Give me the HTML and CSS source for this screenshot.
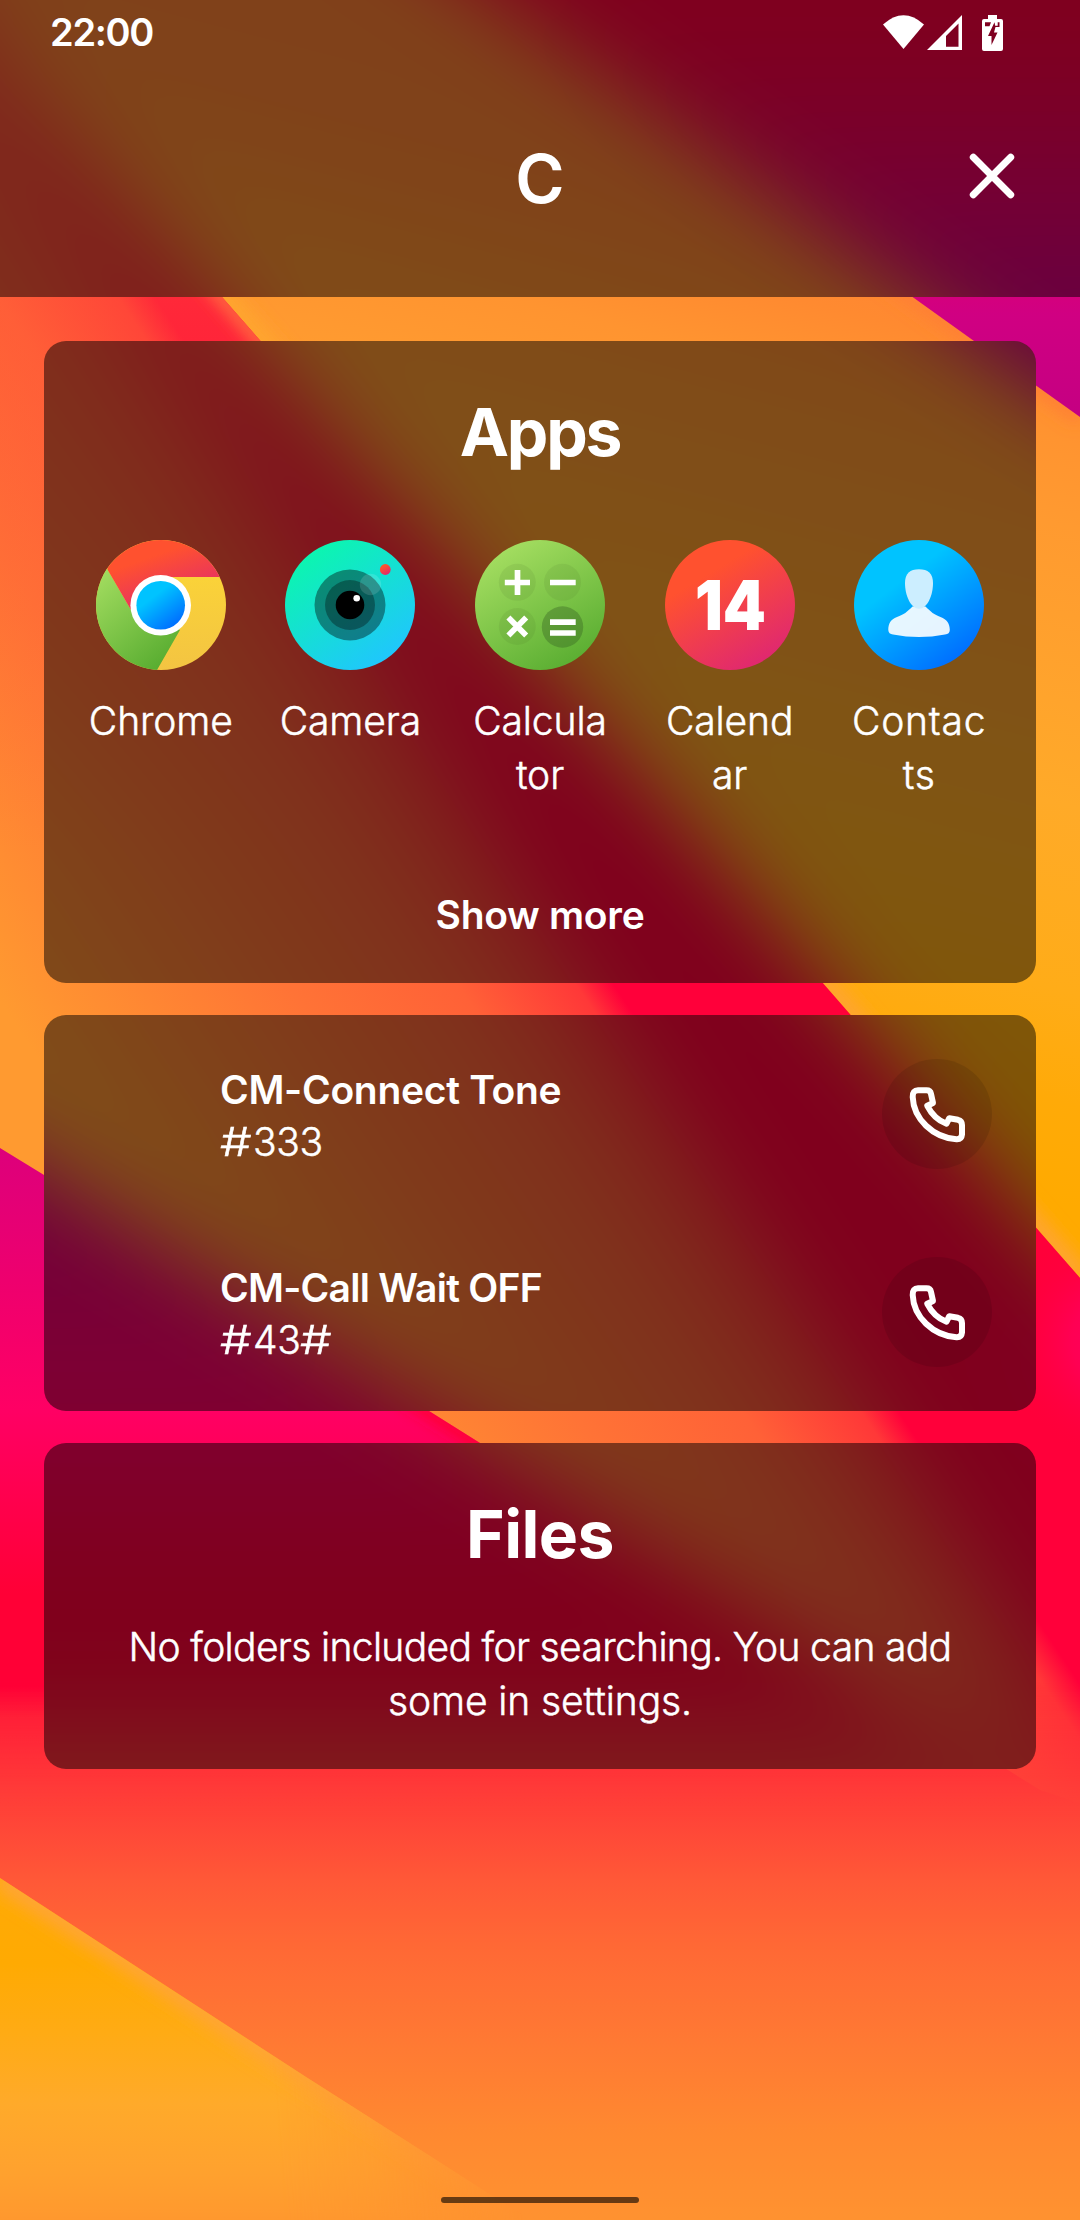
FILE: index.html
```html
<!DOCTYPE html>
<html lang="en">
<head>
<meta charset="utf-8">
<title>Search</title>
<link rel="stylesheet" href="styles.css">
</head>
<body>
<svg class="wallpaper" viewBox="0 0 1080 2220" aria-hidden="true">
  <defs>
    <linearGradient id="band" gradientUnits="userSpaceOnUse" x1="0" y1="0" x2="-225" y2="873">
      <stop offset="0" stop-color="#ff8234"/><stop offset=".1" stop-color="#ff8a30"/><stop offset=".18" stop-color="#ff9430"/><stop offset=".27" stop-color="#ff9a30"/><stop offset=".46" stop-color="#ffa42c"/><stop offset=".57" stop-color="#ffaa28"/><stop offset=".77" stop-color="#ffac18"/><stop offset=".89" stop-color="#ffaa08"/><stop offset="1" stop-color="#ffaa00"/>
    </linearGradient>
    <linearGradient id="corner" gradientUnits="userSpaceOnUse" x1="0" y1="0" x2="0" y2="420">
      <stop offset="0" stop-color="#ff003a"/><stop offset=".15" stop-color="#fb0044"/><stop offset=".45" stop-color="#ea0066"/><stop offset=".75" stop-color="#d00082"/><stop offset="1" stop-color="#c40082"/>
    </linearGradient>
    <linearGradient id="fold" gradientUnits="userSpaceOnUse" x1="155" y1="297" x2="-277.6" y2="585.6">
      <stop offset="0" stop-color="#ff003a"/><stop offset=".06" stop-color="#ff3838"/><stop offset=".25" stop-color="#ff6137"/><stop offset=".52" stop-color="#ff7336"/><stop offset=".68" stop-color="#ff8034"/><stop offset="1" stop-color="#ff9a30"/>
    </linearGradient>
    <linearGradient id="foldtop" gradientUnits="userSpaceOnUse" x1="0" y1="50" x2="0" y2="850">
      <stop offset="0" stop-color="#ff5a38" stop-opacity=".7"/><stop offset=".35" stop-color="#ff5a38" stop-opacity=".42"/><stop offset="1" stop-color="#ff5a38" stop-opacity="0"/>
    </linearGradient>
    <linearGradient id="low" gradientUnits="userSpaceOnUse" x1="0" y1="1140" x2="0" y2="2220">
      <stop offset="0" stop-color="#dc007c"/><stop offset=".13" stop-color="#ee006e"/><stop offset=".25" stop-color="#ff0064"/><stop offset=".36" stop-color="#ff0046"/><stop offset=".42" stop-color="#ff0036"/><stop offset=".505" stop-color="#ff0036"/><stop offset=".535" stop-color="#ff2038"/><stop offset=".605" stop-color="#ff3c38"/><stop offset=".685" stop-color="#ff5837"/><stop offset=".745" stop-color="#ff6835"/><stop offset=".84" stop-color="#ff7a33"/><stop offset=".92" stop-color="#ff8930"/><stop offset="1" stop-color="#ff9230"/>
    </linearGradient>
    <linearGradient id="lowfade" gradientUnits="userSpaceOnUse" x1="0" y1="1680" x2="0" y2="1820">
      <stop offset="0" stop-color="#fff" stop-opacity="0"/><stop offset="1" stop-color="#fff"/>
    </linearGradient>
    <mask id="lowmask" maskUnits="userSpaceOnUse" x="-200" y="1600" width="1500" height="700"><rect x="-200" y="1640" width="1480" height="600" fill="url(#lowfade)"/></mask>
    <linearGradient id="gold" gradientUnits="userSpaceOnUse" x1="0" y1="1878" x2="0" y2="2220">
      <stop offset="0" stop-color="#ffaa06"/><stop offset=".25" stop-color="#ffaa02"/><stop offset=".45" stop-color="#ffab14"/><stop offset=".66" stop-color="#ffaa2a"/><stop offset=".85" stop-color="#ffa22e"/><stop offset="1" stop-color="#ff982e"/>
    </linearGradient>
    <linearGradient id="goldfade" gradientUnits="userSpaceOnUse" x1="250" y1="1980" x2="430" y2="2220">
      <stop offset="0" stop-color="#fff"/><stop offset=".35" stop-color="#fff" stop-opacity=".85"/><stop offset="1" stop-color="#fff" stop-opacity=".1"/>
    </linearGradient>
    <linearGradient id="goldfade2" gradientUnits="userSpaceOnUse" x1="280" y1="2200" x2="520" y2="2180">
      <stop offset="0" stop-color="#fff"/><stop offset=".4" stop-color="#fff" stop-opacity=".75"/><stop offset="1" stop-color="#fff" stop-opacity="0"/>
    </linearGradient>
    <mask id="goldmask" maskUnits="userSpaceOnUse" x="0" y="1800" width="560" height="420"><rect y="1800" width="560" height="420" fill="url(#goldfade2)"/></mask>
    <radialGradient id="pink" gradientUnits="userSpaceOnUse" cx="1120" cy="1340" r="120">
      <stop offset="0" stop-color="#ff0062"/><stop offset=".4" stop-color="#ff0056" stop-opacity=".9"/><stop offset="1" stop-color="#ff003a" stop-opacity="0"/>
    </radialGradient>
    <clipPath id="cband"><path d="M-200 -200H219L498 0L1080 417L1280 560V1508L1080 1278L822 982L222 297L0 44L-200 -184Z"/></clipPath>
    <clipPath id="cfold"><path d="M-200 -184L0 44L222 297L822 982L1080 1278L1280 1508V2220H-200Z"/></clipPath>
    <clipPath id="clow"><path d="M-200 1025L0 1148L429 1411L480 1443L1040 1790L1280 1870V2220H-200Z"/></clipPath>
    <clipPath id="cgold"><path d="M0 1878L200 2008L306 2077L441 2163L530 2220H0Z"/></clipPath>
    <filter id="soft" x="-20%" y="-20%" width="140%" height="140%"><feGaussianBlur stdDeviation="8"/></filter>
    <filter id="frost" filterUnits="userSpaceOnUse" x="-200" y="-200" width="1480" height="2420" color-interpolation-filters="sRGB"><feGaussianBlur stdDeviation="43"/></filter>
  </defs>
  <g id="scene">
    <rect x="-200" y="-200" width="1480" height="2420" fill="url(#band)"/>
    <g clip-path="url(#cband)">
      <path d="M0 44L222 297L822 982L1080 1278" fill="none" stroke="#ffa52e" stroke-width="24" filter="url(#soft)"/>
      <path d="M498 0L1080 417" fill="none" stroke="#ff7e34" stroke-width="14" filter="url(#soft)"/>
    </g>
    <path d="M219 -200H1280V560L1080 417L498 0Z" fill="url(#corner)"/>
    <g clip-path="url(#cfold)">
      <rect x="-200" y="-200" width="1480" height="2420" fill="url(#fold)"/>
      <rect x="-200" y="-200" width="1480" height="1050" fill="url(#foldtop)"/>
      <path d="M0 44L222 297L400 500" fill="none" stroke="#ff7040" stroke-width="14" filter="url(#soft)"/>
      <rect x="980" y="1200" width="300" height="280" fill="url(#pink)"/>
    </g>
    <g clip-path="url(#clow)">
      <rect x="-200" y="1000" width="1480" height="1220" fill="url(#low)"/>
      <path d="M300 1332L429 1411L480 1443L700 1580" fill="none" stroke="#ff0028" stroke-width="12" filter="url(#soft)"/>
    </g>
    <rect x="-200" y="1140" width="1480" height="1080" fill="url(#low)" mask="url(#lowmask)"/>
    <g mask="url(#goldmask)">
      <g clip-path="url(#cgold)">
        <rect y="1870" width="560" height="350" fill="url(#gold)"/>
        <path d="M0 1878L200 2008L306 2077L530 2220" fill="none" stroke="#ffa535" stroke-width="22" filter="url(#soft)"/>
      </g>
    </g>
  </g>
</svg>

<header class="topbar glass">
  <svg class="frost" viewBox="0 0 1080 297" aria-hidden="true"><use href="#scene" filter="url(#frost)"/></svg>
  <div class="status">
    <span class="clock">22:00</span>
    <svg class="status-icons" viewBox="0 0 124 40" aria-hidden="true">
      <path d="M1 12.500Q21.500-6 42 12.500L21.500 37Z" fill="#fff"/>
      <path fill-rule="evenodd" d="M45 38L80 3V38ZM64 24V34.700H76.500V11.500Z" fill="#fff"/>
      <path fill-rule="evenodd" d="M106 3h9v4h4a2 2 0 0 1 2 2v28a2 2 0 0 1-2 2h-17a2 2 0 0 1-2-2v-28a2 2 0 0 1 2-2h4zM103 10.300v4h4.500l1.500-4zM112.500 10.300l-6.500 13.700h3.500v9l6-12.500h-3.500l1.500-5.500h4v-4.700h-1.800v3.500h-2.500z" fill="#fff"/>
    </svg>
  </div>
  <div class="query">
    <h1>C</h1>
    <svg class="close" viewBox="0 0 48 48" aria-label="Close"><path d="M5.300 5.300L42.700 42.700M42.700 5.300L5.300 42.700" stroke="#fff" stroke-width="7" stroke-linecap="round"/></svg>
  </div>
</header>

<main class="results">
  <section class="card apps glass">
    <svg class="frost" viewBox="44 341 992 642" aria-hidden="true"><use href="#scene" filter="url(#frost)"/></svg>
    <h2 class="t-apps">Apps</h2>
    <div class="grid">
      <div class="app">
        <svg viewBox="0 0 130 130">
          <defs>
            <linearGradient id="gr" x1=".2" y1="0" x2=".8" y2="1"><stop offset=".25" stop-color="#ff512f"/><stop offset="1" stop-color="#dd2476"/></linearGradient>
            <linearGradient id="gg" x1=".2" y1="0" x2=".8" y2="1"><stop offset="0" stop-color="#a8e063"/><stop offset="1" stop-color="#56ab2f"/></linearGradient>
            <linearGradient id="gy" x1="0" y1="0" x2="0" y2="1"><stop offset="0" stop-color="#fdd835"/><stop offset="1" stop-color="#f3c442"/></linearGradient>
            <linearGradient id="gb" x1=".2" y1=".1" x2=".85" y2=".95"><stop offset=".25" stop-color="#00c3ff"/><stop offset="1" stop-color="#0068ff"/></linearGradient>
            <linearGradient id="gc" x1=".2" y1=".1" x2=".8" y2=".95"><stop offset="0" stop-color="#0cf5b0"/><stop offset="1" stop-color="#20c5ff"/></linearGradient>
            <clipPath id="disc"><circle cx="65" cy="65" r="65"/></clipPath>
          </defs>
          <g clip-path="url(#disc)">
            <rect width="130" height="130" fill="url(#gy)"/>
            <path d="M0 10L11.500 29.500L35 70L84 90L61 130H0Z" fill="url(#gg)"/>
            <path d="M11.500 29.500V0H130V37H65L35 70Z" fill="url(#gr)"/>
          </g>
          <circle cx="64.700" cy="65.300" r="30.300" fill="#fff"/><circle cx="64.700" cy="65.300" r="24.300" fill="url(#gb)"/>
        </svg>
        <p>Chrome</p>
      </div>
      <div class="app">
        <svg viewBox="0 0 130 130"><circle cx="65" cy="65" r="65" fill="url(#gc)"/><circle cx="65" cy="65" r="35.500" fill="#000" opacity=".4"/><circle cx="65" cy="65" r="25" fill="#000" opacity=".32"/><circle cx="65" cy="65" r="14.300" fill="#000"/><circle cx="85.500" cy="44.500" r="10.700" fill="#fff" opacity=".13"/><circle cx="71.700" cy="58.300" r="3.300" fill="#fff"/><circle cx="100.300" cy="29.500" r="5.400" fill="url(#gr)"/></svg>
        <p>Camera</p>
      </div>
      <div class="app">
        <svg viewBox="0 0 130 130"><circle cx="65" cy="65" r="65" fill="url(#gg)"/><g fill="#3d5a20" opacity=".09"><circle cx="42.300" cy="42.300" r="18.500"/><circle cx="87.500" cy="42.300" r="18.500"/><circle cx="42.300" cy="86.500" r="18.500"/></g><circle cx="87.500" cy="87" r="20.700" fill="#305a20" opacity=".35"/><path d="M29.800 42.500H55M42.500 30V55M75 42.500H100.700M75 82.200H100.700M75 93H100.700M33.400 77.600L51.200 95.400M51.200 77.600L33.400 95.400" stroke="#fff" stroke-width="5.700"/></svg>
        <p>Calcula<br>tor</p>
      </div>
      <div class="app">
        <svg viewBox="0 0 130 130"><circle cx="65" cy="65" r="65" fill="url(#gr)"/><text x="30" y="90" class="day" textLength="71" lengthAdjust="spacingAndGlyphs">14</text></svg>
        <p>Calend<br>ar</p>
      </div>
      <div class="app">
        <svg viewBox="0 0 130 130"><circle cx="65" cy="65" r="65" fill="url(#gb)"/><path d="M58.500 66.500C53 72 50 74.500 43 77C36.500 79.300 34.300 84 34.300 90Q34.500 94 39 94.500Q52 97 65 97T91 94.500Q95.700 94 95.800 90C95.800 84 93 79.300 86.500 77C80 74.500 77 72 71.500 66.500Z" fill="#fff" opacity=".9"/><path d="M65 29.300C74 29.300 79 33.500 79 43C79 56 73 68.700 65 68.700S51 56 51 43C51 33.500 56 29.300 65 29.300Z" fill="#cceeff"/></svg>
        <p class="wide">Contac<br>ts</p>
      </div>
    </div>
    <span class="more">Show more</span>
  </section>

  <section class="card contacts glass">
    <svg class="frost" viewBox="44 1015 992 396" aria-hidden="true"><use href="#scene" filter="url(#frost)"/></svg>
    <div class="contact">
      <div><p class="name n1">CM-Connect Tone</p><p class="num"><span class="hash">#</span>333</p></div>
      <span class="call"><svg viewBox="0 0 57 57"><path d="M3.700 11C3.500 6.500 5.500 4.300 9 4.300H17.500Q21.300 4.300 22 7.800L24 17L18.300 19.800C22.500 28 29 34.500 37.500 37.700L40.300 32.200L49 33.800Q53 34.800 53 39V48.500Q52.500 53.600 47.500 53.300C24 51.500 4.500 33 3.700 11Z"/></svg></span>
    </div>
    <div class="contact">
      <div><p class="name n2">CM-Call Wait OFF</p><p class="num"><span class="hash">#</span>43<span class="hash">#</span></p></div>
      <span class="call"><svg viewBox="0 0 57 57"><path d="M3.700 11C3.500 6.500 5.500 4.300 9 4.300H17.500Q21.300 4.300 22 7.800L24 17L18.300 19.800C22.500 28 29 34.500 37.500 37.700L40.300 32.200L49 33.800Q53 34.800 53 39V48.500Q52.500 53.600 47.500 53.300C24 51.500 4.500 33 3.700 11Z"/></svg></span>
    </div>
  </section>

  <section class="card files glass">
    <svg class="frost" viewBox="44 1443 992 326" aria-hidden="true"><use href="#scene" filter="url(#frost)"/></svg>
    <h2 class="t-files">Files</h2>
    <p class="note"><span class="tight">No folders included for searching. You can add</span><br>some in settings.</p>
  </section>
</main>
<div class="navbar"></div>
</body>
</html>
```
FILE: styles.css
```css
* { box-sizing: border-box; }
html, body { margin: 0; height: 2220px; overflow: hidden; }
body {
  position: relative;
  display: flex;
  flex-direction: column;
  background: #ff8a30;
  color: #fff;
  font-family: Inter, "Open Sans", sans-serif;
  font-size: 39px;
  font-weight: 300;
}
h1, h2, p { margin: 0; }
svg { display: block; }
.wallpaper { position: absolute; inset: 0; width: 1080px; height: 2220px; z-index: -1; }
.glass { position: relative; isolation: isolate; overflow: hidden; }
.frost { position: absolute; inset: 0; width: 100%; height: 100%; z-index: -1; filter: brightness(.5); }

.topbar { height: 297px; }
.status { display: flex; justify-content: space-between; padding: 12px 74px 0 50px; }
.clock { font-size: 38px; font-weight: 600; line-height: 40px; letter-spacing: -1.3px; }
.status-icons { width: 124px; height: 40px; }
.query { display: grid; grid-template-columns: 1fr auto 1fr; align-items: start; margin-top: 90px; }
.query h1 { grid-column: 2; font-size: 67px; font-weight: 600; line-height: 74px; }
.close { justify-self: end; width: 48px; height: 48px; margin: 10px 64px 0 0; }

.results { display: flex; flex-direction: column; gap: 32px; padding: 44px 44px 0; }
.card { border-radius: 22px; display: flex; flex-direction: column; align-items: center; }
.card h2 { font-size: 66px; font-weight: 700; line-height: 80px; }
.card .t-apps { letter-spacing: -2.2px; }
.card .t-files { letter-spacing: -.6px; }
.apps { height: 642px; padding-top: 51px; }
.grid { display: grid; grid-template-columns: repeat(5, 1fr); width: 948px; margin-top: 68px; height: 262px; }
.app { display: flex; flex-direction: column; align-items: center; gap: 24px; }
.app svg { width: 130px; height: 130px; }
.app p { text-align: center; line-height: 54px; letter-spacing: -.1px; }
.app p, .num, .note { -webkit-text-stroke: .5px #fff; }
.app .wide { letter-spacing: .8px; }
.day { font-size: 69px; font-weight: 900; fill: #fff; }
.more { margin-top: 86px; line-height: 54px; font-weight: 600; letter-spacing: -.3px; }
.contacts { height: 396px; align-items: stretch; padding: 44px 44px 0 176px; gap: 88px; }
.contact { display: flex; justify-content: space-between; height: 110px; }
.contact p { line-height: 52px; }
.contact > div { padding-top: 5px; }
.name { font-weight: 600; letter-spacing: -.3px; }
.n2 { letter-spacing: -.75px; }
.num { letter-spacing: -.4px; }
.hash { display: inline-block; width: 33px; transform: scaleX(1.28); transform-origin: left; }
.call { width: 110px; height: 110px; border-radius: 50%; background: rgba(0, 0, 0, .1); display: grid; place-items: center; }
.call svg { width: 57px; height: 57px; fill: none; stroke: #fff; stroke-width: 6; stroke-linejoin: round; }
.files { height: 326px; padding-top: 51px; }
.note { margin-top: 46px; line-height: 54px; text-align: center; letter-spacing: -.1px; }
.tight { letter-spacing: -.65px; }
.navbar { position: absolute; left: 441px; top: 2197px; width: 198px; height: 6px; border-radius: 3px; background: rgba(0, 0, 0, .6); }
```
